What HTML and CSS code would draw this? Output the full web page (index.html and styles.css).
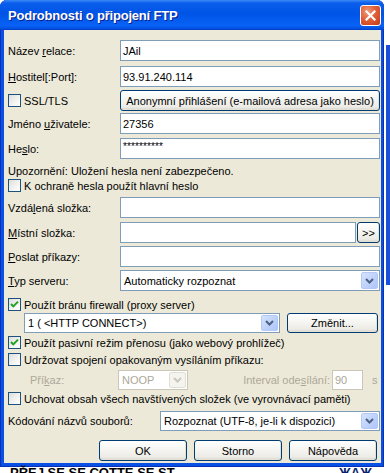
FILE: index.html
```html
<!DOCTYPE html>
<html lang="cs">
<head>
    <meta charset="UTF-8">
    <meta name="viewport" content="width=device-width, initial-scale=1.0">
    <title>Podrobnosti o připojení FTP</title>
    <link rel="stylesheet" href="styles.css">
</head>
<body>
    <div class="screen">
        <div class="window">
            <div class="titlebar">
                <span class="title">Podrobnosti o připojení FTP</span>
                <span class="close">
                    <svg width="11" height="11" viewBox="0 0 11 11">
                        <path d="M1.5 1.5 L9.5 9.5 M9.5 1.5 L1.5 9.5" stroke="#fff" stroke-width="2.2" stroke-linecap="square"/>
                    </svg>
                </span>
            </div>

            <div class="client">
                <div class="row">
                    <span class="lbl">Název <u>r</u>elace:</span>
                    <div class="field">JAil</div>
                </div>
                <div class="row mt5">
                    <span class="lbl"><u>H</u>ostitel[:Port]:</span>
                    <div class="field">93.91.240.114</div>
                </div>
                <div class="row mt3">
                    <span class="check"><span class="cb"></span>SSL/TLS</span>
                    <button class="btn">Anonymní přihlášení (e-mailová adresa jako heslo)</button>
                </div>
                <div class="row mt2">
                    <span class="lbl">Jméno <u>u</u>živatele:</span>
                    <div class="field">27356</div>
                </div>
                <div class="row mt4">
                    <span class="lbl">He<u>s</u>lo:</span>
                    <div class="field pass">**********</div>
                </div>

                <div class="line mt5">Upozornění: Uložení hesla není zabezpečeno.</div>
                <div class="line mt2">
                    <span class="check"><span class="cb"></span>K ochraně hesla použít hlavní heslo</span>
                </div>

                <div class="row mt5">
                    <span class="lbl">Vzdá<u>l</u>ená složka:</span>
                    <div class="field"></div>
                </div>
                <div class="row mt4">
                    <span class="lbl"><u>M</u>ístní složka:</span>
                    <div class="with-btn">
                        <div class="field"></div>
                        <button class="btn small">&gt;&gt;</button>
                    </div>
                </div>
                <div class="row mt3">
                    <span class="lbl"><u>P</u>oslat příkazy:</span>
                    <div class="field"></div>
                </div>
                <div class="row mt3">
                    <span class="lbl"><u>T</u>yp serveru:</span>
                    <div class="combo">
                        <span class="value">Automaticky rozpoznat</span>
                        <span class="arrow"><svg width="9" height="6" viewBox="0 0 9 6"><path d="M1 1 L4.5 4.5 L8 1" fill="none" stroke="#4D6185" stroke-width="2"/></svg></span>
                    </div>
                </div>

                <div class="line mt7">
                    <span class="check"><span class="cb on"><svg width="11" height="11" viewBox="0 0 11 11"><path d="M2 5 L4.3 7.4 L9 2.6" fill="none" stroke="#21A121" stroke-width="2"/></svg></span>Použít bránu firewall (proxy server)</span>
                </div>
                <div class="proxy mt2">
                    <div class="combo">
                        <span class="value">1 ( &lt;HTTP CONNECT&gt;)</span>
                        <span class="arrow"><svg width="9" height="6" viewBox="0 0 9 6"><path d="M1 1 L4.5 4.5 L8 1" fill="none" stroke="#4D6185" stroke-width="2"/></svg></span>
                    </div>
                    <button class="btn change">Změnit...</button>
                </div>
                <div class="line mt3">
                    <span class="check"><span class="cb on"><svg width="11" height="11" viewBox="0 0 11 11"><path d="M2 5 L4.3 7.4 L9 2.6" fill="none" stroke="#21A121" stroke-width="2"/></svg></span>Použít pasivní režim přenosu (jako webový prohlížeč)</span>
                </div>
                <div class="line mt4">
                    <span class="check"><span class="cb"></span>Udržovat spojení opakovaným vysíláním příkazu:</span>
                </div>
                <div class="keep mt4">
                    <span class="lbl off keep-lbl">Pří<u>k</u>az:</span>
                    <div class="combo off noop">
                        <span class="value">NOOP</span>
                        <span class="arrow"><svg width="9" height="6" viewBox="0 0 9 6"><path d="M1 1 L4.5 4.5 L8 1" fill="none" stroke="#C9C7BA" stroke-width="2"/></svg></span>
                    </div>
                    <span class="lbl off interval">Interval ode<u>s</u>ílání:</span>
                    <div class="field off secs">90</div>
                    <span class="lbl off unit">s</span>
                </div>
                <div class="line mt2">
                    <span class="check"><span class="cb"></span>Uchovat obsah všech navštívených složek (ve vyrovnávací paměti)</span>
                </div>
                <div class="row enc mt6">
                    <span class="lbl">Kódování názvů souborů:</span>
                    <div class="combo">
                        <span class="value">Rozpoznat (UTF-8, je-li k dispozici)</span>
                        <span class="arrow"><svg width="9" height="6" viewBox="0 0 9 6"><path d="M1 1 L4.5 4.5 L8 1" fill="none" stroke="#4D6185" stroke-width="2"/></svg></span>
                    </div>
                </div>

                <div class="buttons">
                    <button class="btn">OK</button>
                    <button class="btn">Storno</button>
                    <button class="btn">Nápověda</button>
                </div>
            </div>
        </div>

        <div class="behind">
            <div class="strip"></div>
        </div>
    </div>
    <div class="under">
        <span>PŘEJ SE SE COTTE SE ST</span>
        <span class="under-right">ЖАЖ</span>
    </div>
</body>
</html>
```

FILE: styles.css
```css
* {
    box-sizing: border-box;
}

body {
    margin: 0;
    padding: 0;
    background: #ffffff;
    font-family: "Liberation Sans", Arial, sans-serif;
    font-size: 11px;
    color: #000;
    overflow: hidden;
}

.screen {
    display: flex;
    align-items: flex-start;
}

.window {
    width: 384px;
    flex-shrink: 0;
    background: #0A50E4;
    border-radius: 7px 7px 0 0;
    padding: 0 3px 4px 4px;
    box-shadow: inset 1px 0 #0831B8, inset -1px 0 #0831B8, inset 0 -1px #0831B8;
}

.titlebar {
    height: 30px;
    margin: 0 -3px 0 -4px;
    border-radius: 7px 7px 0 0;
    background: linear-gradient(to bottom, #3D8BF5 0%, #0A5EEB 10%, #0054E6 45%, #0862F5 85%, #0451E0 95%, #003BC8 100%);
    display: flex;
    align-items: center;
    justify-content: space-between;
    padding: 0 3px 0 8px;
}

.title {
    color: #fff;
    font-weight: bold;
    font-size: 13px;
    letter-spacing: -0.2px;
    text-shadow: 1px 1px 0 #0A1E8C;
}

.close {
    width: 21px;
    height: 21px;
    border: 1px solid #fff;
    border-radius: 3px;
    background: radial-gradient(circle at 35% 30%, #F09A7A 0%, #E0603A 45%, #C43A14 100%);
    display: flex;
    align-items: center;
    justify-content: center;
}

.client {
    background: #ECE9D8;
    padding: 10px 1px 2px 4px;
    display: flex;
    flex-direction: column;
}

.mt2 { margin-top: 2px; }
.mt3 { margin-top: 3px; }
.mt4 { margin-top: 4px; }
.mt5 { margin-top: 5px; }
.mt6 { margin-top: 6px; }
.mt7 { margin-top: 7px; }

.row {
    display: grid;
    grid-template-columns: 112px 260px;
    align-items: center;
    height: 21px;
}

.row.enc {
    grid-template-columns: 152px 220px;
    height: 20px;
}

.line {
    height: 13px;
    display: flex;
    align-items: center;
    white-space: nowrap;
}

.lbl {
    white-space: nowrap;
}

.lbl.off {
    color: #ACA899;
}

u {
    text-decoration: underline;
    text-underline-offset: 1px;
}

.field {
    height: 21px;
    border: 1px solid #7F9DB9;
    background: #fff;
    padding: 0 2px;
    display: flex;
    align-items: center;
    white-space: nowrap;
}

.field.pass {
    font-size: 10px;
    align-items: flex-start;
    padding-top: 2px;
    letter-spacing: 0.1px;
}

.field.off {
    border-color: #C9C7BA;
    color: #ACA899;
}

.check {
    display: flex;
    align-items: center;
    gap: 3px;
    white-space: nowrap;
}

.cb {
    width: 13px;
    height: 13px;
    flex-shrink: 0;
    border: 1px solid #1C5180;
    background: linear-gradient(135deg, #DCDCD7 0%, #F4F4F2 60%, #FFFFFF 100%);
    display: flex;
    align-items: center;
    justify-content: center;
}

.btn {
    font-family: "Liberation Sans", Arial, sans-serif;
    font-size: 11px;
    color: #000;
    height: 21px;
    border: 1px solid #003C74;
    border-radius: 3px;
    background: linear-gradient(to bottom, #FFFFFF 0%, #F6F6F3 40%, #ECEBE6 85%, #D6D0C5 100%);
    padding: 0 4px;
    white-space: nowrap;
    box-shadow: inset -1px -1px 0 #E3E0D6;
}

.btn.small {
    width: 23px;
    padding: 0;
    flex-shrink: 0;
}

.with-btn {
    display: flex;
    gap: 1px;
}

.with-btn .field {
    flex: 1;
}

.combo {
    height: 21px;
    border: 1px solid #7F9DB9;
    background: #fff;
    display: flex;
    align-items: stretch;
    padding: 1px;
}

.combo .value {
    flex: 1;
    display: flex;
    align-items: center;
    padding-left: 2px;
    white-space: nowrap;
    overflow: hidden;
}

.arrow {
    width: 17px;
    flex-shrink: 0;
    border: 1px solid #B4C8F6;
    border-radius: 2px;
    background: linear-gradient(135deg, #D6E3FD 0%, #BCD0FA 60%, #AFC6F8 100%);
    display: flex;
    align-items: center;
    justify-content: center;
}

.combo.off {
    border-color: #C9C7BA;
    color: #ACA899;
}

.combo.off .arrow {
    border-color: #E2DFD2;
    background: #F4F3EE;
}

.proxy {
    display: flex;
    align-items: center;
    gap: 7px;
    padding-left: 16px;
    height: 20px;
}

.proxy .combo {
    width: 256px;
    height: 20px;
}

.btn.change {
    width: 91px;
    height: 20px;
}

.keep {
    display: flex;
    align-items: center;
    height: 20px;
}

.keep-lbl {
    width: 110px;
    padding-left: 22px;
}

.combo.noop {
    width: 70px;
    height: 20px;
}

.interval {
    width: 142px;
    text-align: right;
}

.field.secs {
    width: 31px;
    height: 20px;
    margin-left: 2px;
}

.unit {
    margin-left: 9px;
}

.row.enc .combo {
    height: 20px;
}

.buttons {
    display: flex;
    gap: 7px;
    margin-top: 9px;
    padding-left: 91px;
}

.buttons .btn {
    width: 88px;
}

.behind {
    width: 6px;
    padding-left: 2px;
    padding-top: 45px;
}

.strip {
    height: 240px;
    background: #1C4FD8;
}

.under {
    display: flex;
    justify-content: space-between;
    padding: 0 18px 0 10px;
    margin-top: -1px;
    font-weight: bold;
    font-size: 13px;
    line-height: 13px;
}

.under-right {
    color: #0A1E6C;
}
```
